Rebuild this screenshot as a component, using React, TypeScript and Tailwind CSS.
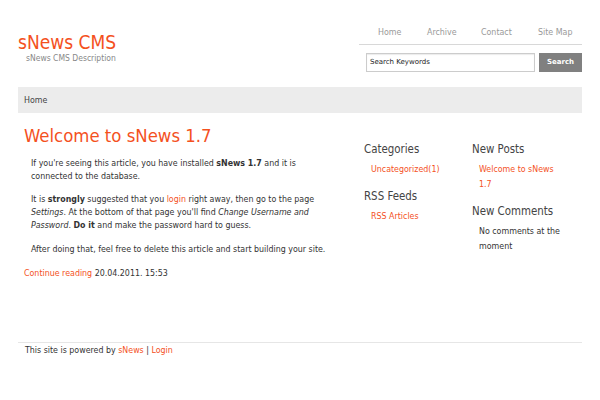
export default function App() {
  return (
    <div className="w-[600px] h-[400px] bg-white text-[#333] font-['DejaVu_Sans_Condensed','DejaVu_Sans',sans-serif] overflow-hidden">
      <div className="ml-[18px] w-[564px]">
        {/* header */}
        <div className="flex justify-between h-[87px]">
          <div className="pt-[30px]">
            <h1 className="text-[19px] leading-[24px] text-[#f4511e]">sNews CMS</h1>
            <p className="pl-[8px] text-[8.5px] leading-[9px] text-[#888]">sNews CMS Description</p>
          </div>
          <div className="w-[223px] pt-[26px]">
            <ul className="flex pl-[19px] pb-[6px] border-b border-[#d8d8d8] text-[8.8px] leading-[12px] text-[#999]">
              <li className="w-[49px]">Home</li>
              <li className="w-[54px]">Archive</li>
              <li className="w-[57px]">Contact</li>
              <li>Site Map</li>
            </ul>
            <div className="flex gap-[4px] mt-[8px] pl-[7px]">
              <div className="w-[169px] h-[19px] border border-[#ccc] shadow-[inset_0_1px_1px_rgba(0,0,0,0.08)] px-[3px] flex items-center text-[7px] text-[#222] font-['DejaVu_Sans',sans-serif]">
                Search Keywords
              </div>
              <div className="w-[43px] h-[19px] bg-[#808080] text-white text-[7px] font-bold flex items-center justify-center font-['DejaVu_Sans',sans-serif]">
                Search
              </div>
            </div>
          </div>
        </div>

        {/* nav bar */}
        <div className="h-[26px] bg-[#ececec] flex items-center pt-[2px] px-[6px] text-[8.8px] text-[#444]">Home</div>

        {/* main */}
        <div className="flex h-[229px]">
          <div className="w-[346px] pl-[6px] pt-[12px]">
            <h2 className="text-[18.4px] leading-[22px] text-[#f4511e]">Welcome to sNews 1.7</h2>
            <div className="w-[310px] pl-[7px] pt-[10px] text-[8.8px] leading-[13px] text-[#333]">
              <p>
                If you're seeing this article, you have installed <b>sNews 1.7</b> and it is connected to the database.
              </p>
              <p className="mt-[10px]">
                It is <b>strongly</b> suggested that you <span className="text-[#f4511e]">login</span> right away, then go to the page{" "}
                <i>Settings</i>. At the bottom of that page you'll find <i>Change Username and Password</i>. <b>Do it</b> and make the password hard to guess.
              </p>
              <p className="mt-[11px]">After doing that, feel free to delete this article and start building your site.</p>
            </div>
            <p className="mt-[11px] text-[8.8px] leading-[13px]">
              <span className="text-[#f4511e]">Continue reading</span> 20.04.2011. 15:53
            </p>
          </div>
          <div className="w-[108px] pt-[28px]">
            <h3 className="text-[11.4px] leading-[16px] text-[#444]">Categories</h3>
            <p className="pl-[7px] pt-[5px] text-[8.8px] leading-[15px] text-[#f4511e]">Uncategorized(1)</p>
            <h3 className="mt-[11px] text-[11.4px] leading-[16px] text-[#444]">RSS Feeds</h3>
            <p className="pl-[7px] pt-[5px] text-[8.8px] leading-[15px] text-[#f4511e]">RSS Articles</p>
          </div>
          <div className="w-[110px] pt-[28px]">
            <h3 className="text-[11.4px] leading-[16px] text-[#444]">New Posts</h3>
            <p className="w-[90px] pl-[7px] pt-[5px] text-[8.8px] leading-[15px] text-[#f4511e]">Welcome to sNews 1.7</p>
            <h3 className="mt-[11px] text-[11.4px] leading-[16px] text-[#444]">New Comments</h3>
            <p className="w-[90px] pl-[7px] pt-[5px] text-[8.8px] leading-[15px] text-[#333]">No comments at the moment</p>
          </div>
        </div>

        {/* footer */}
        <div className="border-t border-[#e6e6e6] pt-[1px] px-[7px] text-[8.8px] leading-[12px] text-[#333]">
          This site is powered by <span className="text-[#f4511e]">sNews</span> | <span className="text-[#f4511e]">Login</span>
        </div>
      </div>
    </div>
  )
}
